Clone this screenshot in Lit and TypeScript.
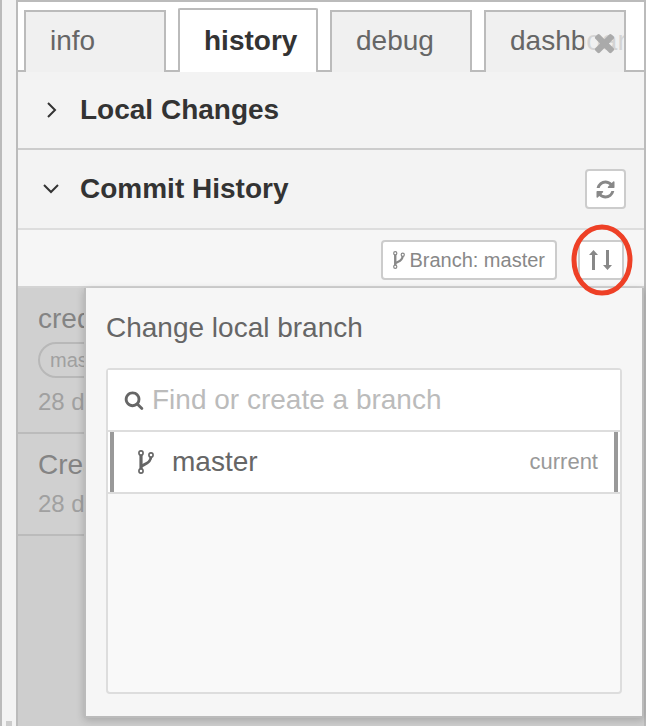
import { LitElement, html, svg, css } from "lit";
import { customElement, state } from "lit/decorators.js";

const branchIcon = html`<svg class="branch-icon" viewBox="0 0 16 24" aria-hidden="true">
  <g fill="none" stroke="currentColor">
    <path stroke-width="3.200" d="M3 5v14" />
    <path stroke-width="2.800" d="M3 16.500c2.500-2.500 9.800-2.500 10-10" />
    <circle class="node" cx="3" cy="3" r="2.100" stroke-width="1.600" />
    <circle class="node" cx="13" cy="5" r="2.100" stroke-width="1.600" />
    <circle class="node" cx="3" cy="21" r="2.100" stroke-width="1.600" />
  </g>
</svg>`;

const faIcon = (cls: string, d: string) =>
  html`<svg class=${cls} viewBox="0 0 1792 1792" aria-hidden="true">${svg`<path fill="currentColor" d=${d} />`}</svg>`;

const REFRESH =
  "M1639 1056q0 5-1 7-64 268-268 434.500t-478 166.500q-146 0-282.500-55t-243.500-157l-129 129q-19 19-45 19t-45-19-19-45v-448q0-26 19-45t45-19h448q26 0 45 19t19 45-19 45l-137 137q71 66 161 102t187 36q134 0 250-65t186-179q11-17 53-117 8-23 30-23h192q13 0 22.500 9.500t9.500 22.500zm25-800v448q0 26-19 45t-45 19h-448q-26 0-45-19t-19-45 19-45l138-138q-148-137-349-137-134 0-250 65t-186 179q-11 17-53 117-8 23-30 23h-199q-13 0-22.500-9.500t-9.500-22.500v-7q65-268 270-434.500t480-166.500q146 0 284 55.500t245 156.500l130-129q19-19 45-19t45 19 19 45z";
const SEARCH =
  "M1216 832q0-185-131.500-316.500t-316.500-131.500-316.500 131.500-131.500 316.500 131.500 316.500 316.500 131.500 316.500-131.500 131.500-316.500zm512 832q0 52-38 90t-90 38q-54 0-90-38l-343-342q-179 124-399 124-143 0-273.500-55.500t-225-150-150-225-55.500-273.500 55.500-273.500 150-225 225-150 273.500-55.500 273.500 55.500 225 150 150 225 55.500 273.500q0 220-124 399l343 343q37 37 37 90z";
const TIMES =
  "M1490 1322q0 40-28 68l-136 136q-28 28-68 28t-68-28l-294-294-294 294q-28 28-68 28t-68-28l-136-136q-28-28-28-68t28-68l294-294-294-294q-28-28-28-68t28-68l136-136q28-28 68-28t68 28l294 294 294-294q28-28 68-28t68 28l136 136q28 28 28 68t-28 68l-294 294 294 294q28 28 28 68z";

@customElement("app-root")
export class AppRoot extends LitElement {
  @state() private active = "history";

  static styles = css`
    :host {
      display: block;
      font-family: "Liberation Sans", Arial, sans-serif;
      font-size: 28px;
      line-height: 32px;
      color: #666;
    }
    * { box-sizing: border-box; }
    button {
      font: inherit;
      color: inherit;
      margin: 0;
      padding: 0;
      border: 0;
      background: none;
      cursor: pointer;
    }
    svg { display: block; flex: none; }
    .workspace {
      display: flex;
      min-height: 100vh;
      overflow: hidden;
      background: #f3f3f3;
    }
    .gutter {
      flex: none;
      display: flex;
      align-items: flex-end;
      justify-content: center;
      width: 18px;
      border: solid #bbb;
      border-width: 0 2px;
    }
    .grip { width: 6px; height: 5px; background: #ccc; }
    .sidebar {
      flex: 1;
      min-width: 0;
      display: flex;
      flex-direction: column;
      border: solid #bbb;
      border-width: 2px 2px 0 0;
    }
    .tabs {
      display: flex;
      align-items: flex-end;
      gap: 12px;
      height: 70px;
      padding: 0 18px 0 6px;
      background: linear-gradient(#bbb, #bbb) bottom / 100% 2px no-repeat #fff;
    }
    .tab {
      position: relative;
      flex: 1;
      min-width: 0;
      height: 62px;
      border: 2px solid #bbb;
      border-bottom: 0;
      background: #f0f0f0;
      overflow: hidden;
    }
    .tab.active {
      flex: 0 1 140px;
      height: 64px;
      background: #fff;
      color: #333;
      font-weight: bold;
      border-radius: 2px;
    }
    .tab-label {
      display: block;
      width: 100%;
      height: 58px;
      padding-left: 24px;
      text-align: left;
      white-space: nowrap;
    }
    .tab.active .tab-label { height: 62px; }
    .tab-close {
      position: absolute;
      top: 0;
      right: 0;
      display: grid;
      place-items: center;
      width: 40px;
      height: 60px;
      background: rgba(240, 240, 240, 0.8);
      color: #aaa;
    }
    .times { width: 29px; height: 29px; }
    .section {
      display: flex;
      align-items: center;
      justify-content: space-between;
      height: 78px;
      padding-right: 18px;
      border-bottom: 2px solid #ccc;
    }
    .section.open { height: 80px; border-color: #ddd; }
    .heading { margin: 0; font: inherit; }
    .toggle {
      display: flex;
      align-items: center;
      gap: 18px;
      padding-left: 22px;
      color: #333;
      font-weight: bold;
      line-height: 32px;
    }
    .chevron { width: 22px; height: 22px; }
    .box-button {
      display: flex;
      align-items: center;
      justify-content: center;
      height: 40px;
      border: 2px solid #ccc;
      border-radius: 4px;
      background: #fff;
      color: #888;
      font-size: 20px;
      line-height: 24px;
    }
    .refresh-button { width: 41px; }
    .refresh { width: 21px; height: 21px; }
    .toolbar {
      display: flex;
      align-items: center;
      justify-content: flex-end;
      gap: 21px;
      height: 58px;
      padding: 4px 20px 0 0;
      border-bottom: 2px solid #d4d4d4;
      background: #f6f6f6;
    }
    .branch-button { gap: 4px; padding: 0 10px; }
    .branch-icon { width: 16px; height: 24px; }
    .node { fill: #fff; }
    .branch-button .branch-icon { width: 12px; height: 18px; }
    .highlight { position: relative; z-index: 2; }
    .arrows-button { width: 46px; }
    .arrows { width: 24px; height: 20px; }
    .ring {
      position: absolute;
      top: -16px;
      left: -7px;
      width: 62px;
      height: 72px;
      pointer-events: none;
    }
    .history {
      position: relative;
      flex: 1;
      padding-bottom: 8px;
      background: #cecece;
    }
    .commits {
      position: absolute;
      top: 0;
      left: 0;
      right: 0;
      margin: 0;
      padding: 0;
      list-style: none;
      color: #848484;
    }
    .commit {
      display: flex;
      flex-direction: column;
      align-items: flex-start;
      padding: 15px 20px 14px;
      border-bottom: 2px solid #bbb;
      background: #d0d0d0;
    }
    .ref {
      height: 36px;
      margin: 7px 0 8px;
      padding: 0 10px;
      border: 2px solid #b8b8b8;
      border-radius: 18px;
      color: #a0a0a0;
      font-size: 20px;
    }
    .age { color: #a0a0a0; font-size: 24px; }
    .commit-title + .age { margin-top: 7px; }
    .popover {
      position: relative;
      z-index: 1;
      margin-left: 66px;
      padding: 24px 20px 22px;
      border: solid #bbb;
      border-width: 0 2px 2px;
      background: #f6f6f6;
      box-shadow: 0 2px 8px rgba(0, 0, 0, 0.2);
    }
    .popover-title {
      margin: 0 0 24px;
      font: inherit;
    }
    .picker {
      min-height: 326px;
      border: 2px solid #ddd;
      border-radius: 4px;
      background: #f9f9f9;
    }
    .search {
      display: flex;
      align-items: center;
      gap: 8px;
      height: 62px;
      padding: 0 16px;
      border-bottom: 2px solid #ddd;
      background: #fff;
    }
    .magnifier { width: 20px; height: 20px; }
    .field {
      flex: 1;
      min-width: 0;
      height: 40px;
      padding: 0;
      border: 0;
      outline: 0;
      background: none;
      font: inherit;
      color: inherit;
    }
    .field::placeholder { color: #bbb; opacity: 1; }
    .branch {
      display: flex;
      width: 100%;
      height: 62px;
      padding: 0 2px;
      border-bottom: 2px solid #ddd;
      background: #fff;
    }
    .branch-body {
      flex: 1;
      display: flex;
      align-items: center;
      height: 60px;
      gap: 18px;
      padding: 0 16px 0 24px;
      border: solid #999;
      border-width: 0 4px;
    }
    .branch-name { flex: 1; text-align: left; }
    .current { color: #999; font-size: 22px; }
  `;

  private tab(name: string, closable = false) {
    const on = this.active === name;
    return html`<div class="tab ${on ? "active" : ""}">
      <button class="tab-label" role="tab" aria-selected=${on} @click=${() => (this.active = name)}>${name}</button>
      ${closable ? html`<button class="tab-close" aria-label="Close">${faIcon("times", TIMES)}</button>` : ""}
    </div>`;
  }

  private chevron(d: string) {
    return html`<svg class="chevron" viewBox="0 0 22 22" aria-hidden="true">
      ${svg`<path d=${d} fill="none" stroke="currentColor" stroke-width="2" />`}
    </svg>`;
  }

  render() {
    return html`<div class="workspace">
      <div class="gutter"><div class="grip"></div></div>
      <main class="sidebar">
        <div class="tabs" role="tablist">
          ${this.tab("info")} ${this.tab("history")} ${this.tab("debug")} ${this.tab("dashboard", true)}
        </div>
        <div class="section">
          <h2 class="heading">
            <button class="toggle" aria-expanded="false">${this.chevron("M8 4l7 7-7 7")}Local Changes</button>
          </h2>
        </div>
        <div class="section open">
          <h2 class="heading">
            <button class="toggle" aria-expanded="true">${this.chevron("M4 7l7 7 7-7")}Commit History</button>
          </h2>
          <button class="box-button refresh-button" aria-label="Refresh">${faIcon("refresh", REFRESH)}</button>
        </div>
        <div class="toolbar">
          <button class="box-button branch-button">${branchIcon}<span>Branch: master</span></button>
          <div class="highlight">
            <button class="box-button arrows-button" aria-label="Push and pull">
              <svg class="arrows" viewBox="0 0 24 20" aria-hidden="true">
                <path fill="currentColor" d="M4.500 0L9 5H6v15H3V5H0zM18.500 20L14 15h3V0h3v15h3z" />
              </svg>
            </button>
            <svg class="ring" viewBox="0 0 62 72" aria-hidden="true">
              <ellipse cx="31" cy="36" rx="28" ry="33" fill="none" stroke="#ee4026" stroke-width="5" />
            </svg>
          </div>
        </div>
        <div class="history">
          <ul class="commits">
            <li class="commit">
              <span class="commit-title">cred</span>
              <span class="ref">master</span>
              <span class="age">28 d</span>
            </li>
            <li class="commit">
              <span class="commit-title">Crea</span>
              <span class="age">28 d</span>
            </li>
          </ul>
          <section class="popover">
            <h3 class="popover-title">Change local branch</h3>
            <div class="picker">
              <label class="search">
                ${faIcon("magnifier", SEARCH)}
                <input class="field" type="text" aria-label="Branch" placeholder="Find or create a branch" />
              </label>
              <button class="branch">
                <span class="branch-body">
                  ${branchIcon}<span class="branch-name">master</span><span class="current">current</span>
                </span>
              </button>
            </div>
          </section>
        </div>
      </main>
    </div>`;
  }
}
